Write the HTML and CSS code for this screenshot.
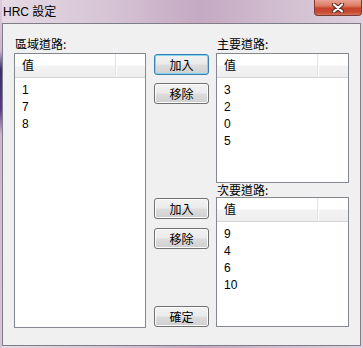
FILE: index.html
```html
<!DOCTYPE html>
<html lang="zh-TW">
<head>
  <meta charset="UTF-8" />
  <meta name="viewport" content="width=device-width, initial-scale=1" />
  <title>HRC 設定</title>
  <link rel="stylesheet" href="styles.css">
</head>
<body>
  <div class="window">
    <div class="titlebar">
      <span class="title">HRC 設定</span>
      <button class="close" type="button" aria-label="關閉">
        <svg width="14" height="10" viewBox="0 0 14 10">
          <path d="M3 1.5 L11 8.5 M11 1.5 L3 8.5" stroke="#5a2a24" stroke-width="4.2" stroke-linecap="round" fill="none"/>
          <path d="M3 1.5 L11 8.5 M11 1.5 L3 8.5" stroke="#ffffff" stroke-width="2.2" stroke-linecap="round" fill="none"/>
        </svg>
      </button>
    </div>

    <div class="client">
      <div class="col">
        <div class="caption">區域道路:</div>
        <div class="listbox tall">
          <div class="header"><span class="hcell">值</span><span class="hrest"></span></div>
          <ul class="items">
            <li>1</li>
            <li>7</li>
            <li>8</li>
          </ul>
        </div>
      </div>

      <div class="col mid">
        <button class="btn default btn-add1" type="button">加入</button>
        <button class="btn btn-del1" type="button">移除</button>
        <button class="btn btn-add2" type="button">加入</button>
        <button class="btn btn-del2" type="button">移除</button>
        <button class="btn btn-ok" type="button">確定</button>
      </div>

      <div class="col">
        <div class="caption">主要道路:</div>
        <div class="listbox half">
          <div class="header"><span class="hcell">值</span><span class="hrest"></span></div>
          <ul class="items">
            <li>3</li>
            <li>2</li>
            <li>0</li>
            <li>5</li>
          </ul>
        </div>
        <div class="caption second">次要道路:</div>
        <div class="listbox half">
          <div class="header"><span class="hcell">值</span><span class="hrest"></span></div>
          <ul class="items">
            <li>9</li>
            <li>4</li>
            <li>6</li>
            <li>10</li>
          </ul>
        </div>
      </div>
    </div>
  </div>
</body>
</html>
```

FILE: styles.css
```css
html, body {
  margin: 0;
  padding: 0;
}
body {
  width: 363px;
  height: 348px;
  overflow: hidden;
  font-family: "Liberation Sans", "Noto Sans CJK TC", sans-serif;
  font-size: 12px;
  color: #000;
}
.window {
  width: 363px;
  height: 348px;
  box-sizing: border-box;
  padding: 0 2px 0 2px;
  background:
    linear-gradient(to bottom, #dccbdc 0, #cdb6cf 50px, #3a2c6e 70px, #5a3a8a 110px, #cbb8cc 135px, #d6c6d6 100%) left top / 2px 100% no-repeat,
    linear-gradient(to right, #e6dbe4 0%, #d6c3d5 30%, #c4aac3 55%, #d3c0d2 80%, #ddd0dc 100%);
}
.titlebar {
  height: 23px;
  display: flex;
  align-items: flex-start;
  justify-content: space-between;
}
.title {
  font-family: "Liberation Sans", "Noto Sans CJK TC", sans-serif;
  font-size: 12px;
  line-height: 14px;
  padding: 5px 0 0 1px;
  color: #000;
}
.close {
  width: 48px;
  height: 16px;
  margin: 0 -1px 0 0;
  padding: 0;
  border: 1px solid #7e3b32;
  border-top: none;
  border-radius: 0 0 4px 4px;
  background: linear-gradient(to bottom, #e9a393 0, #dc7a64 6px, #c9432c 8px, #c64a33 12px, #d8806a 16px);
  display: flex;
  align-items: center;
  justify-content: center;
}
.close svg {
  display: block;
}

.client {
  height: 323px;
  box-sizing: border-box;
  border: 1px solid #7f7d88;
  background: #f0f0f0;
  padding: 12px 0 0 11px;
  display: grid;
  grid-template-columns: 132px 55px 132px;
  column-gap: 8px;
  align-items: start;
}
.client .col:last-child {
  margin-left: -1px;
}
.caption {
  font-family: "Noto Sans CJK TC", sans-serif;
  font-size: 12px;
  line-height: 16px;
  height: 16px;
  margin-bottom: 1px;
  padding-left: 1px;
}
.caption.second {
  height: 14px;
  line-height: 14px;
  margin: 0;
}
.listbox {
  box-sizing: border-box;
  border: 1px solid #828790;
  background: #fff;
  overflow: hidden;
}
.listbox.tall {
  height: 275px;
}
.listbox.half {
  height: 130px;
}
.header {
  display: flex;
  height: 24px;
  box-sizing: border-box;
  border-bottom: 1px solid #d5d5d5;
  background: linear-gradient(to bottom, #ffffff 0, #ffffff 11px, #f3f3f4 12px, #eeeef0 23px);
}
.hcell {
  width: 101px;
  box-sizing: border-box;
  padding: 4px 0 0 7px;
  font-family: "Noto Sans CJK TC", sans-serif;
  font-size: 12px;
  line-height: 14px;
  border-right: 1px solid #e2e3e5;
  box-shadow: 1px 0 0 #fff;
}
.hrest {
  flex: 1;
}
.items {
  list-style: none;
  margin: 0;
  padding: 4px 0 0 7px;
}
.items li {
  font-family: "Liberation Sans", sans-serif;
  font-size: 12px;
  line-height: 17px;
  height: 17px;
}

.mid {
  display: flex;
  flex-direction: column;
  padding-top: 18px;
}
.btn {
  width: 55px;
  height: 21px;
  padding: 0;
  box-sizing: border-box;
  border: 1px solid #707070;
  border-radius: 3px;
  background: linear-gradient(to bottom, #f2f2f2 0, #ebebeb 9px, #dddddd 10px, #cfcfcf 100%);
  box-shadow: inset 0 0 0 1px #fcfcfc;
  font-family: "Noto Sans CJK TC", sans-serif;
  font-size: 12px;
  line-height: 17px;
  color: #000;
}
.btn.default {
  border-color: #3c7fb1;
  box-shadow: inset 0 0 0 1px #7fd4f6;
}
.btn-del1 { margin-top: 8px; }
.btn-add2 { margin-top: 94px; }
.btn-del2 { margin-top: 9px; }
.btn-ok { margin-top: 57px; }
```
